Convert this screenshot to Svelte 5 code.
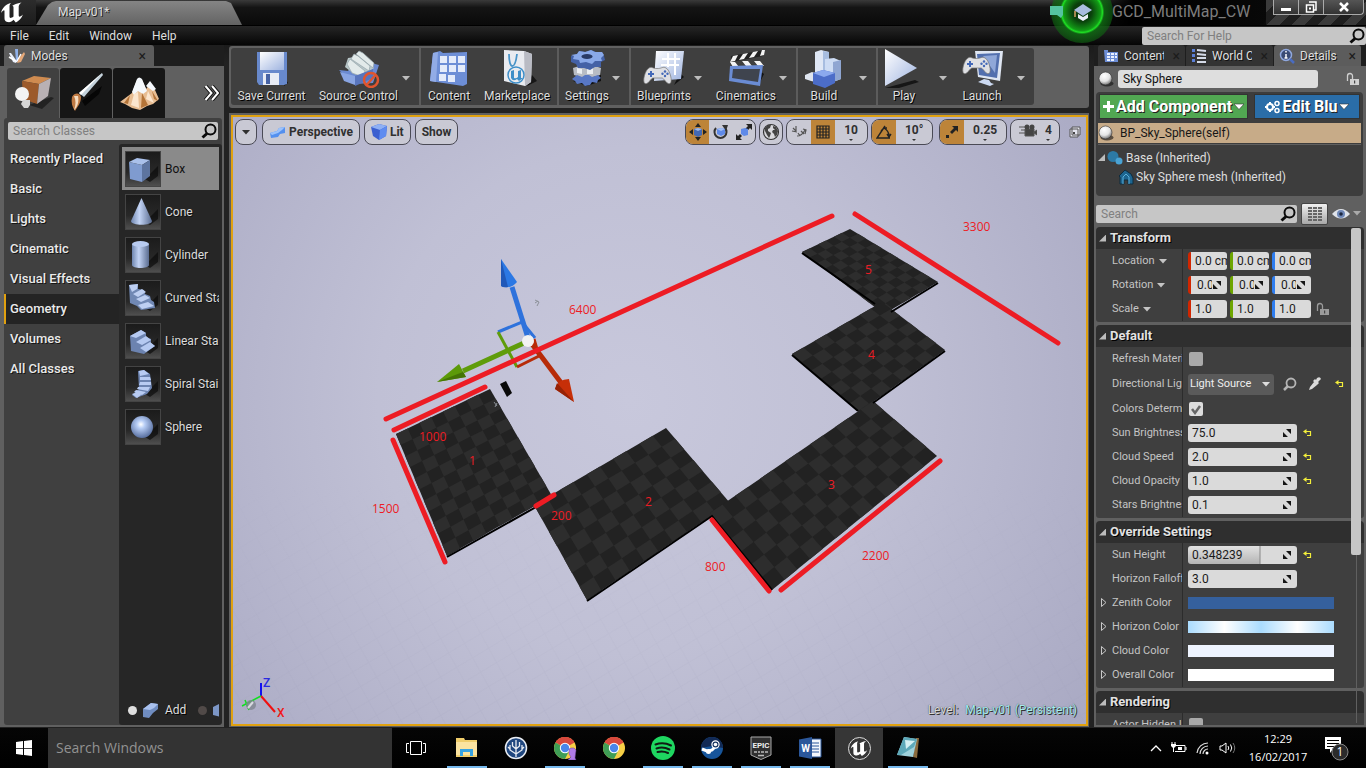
<script>
  const categories = ['Recently Placed', 'Basic', 'Lights', 'Cinematic', 'Visual Effects', 'Geometry', 'Volumes', 'All Classes'];
  const shapes = ['Box', 'Cone', 'Cylinder', 'Curved Stair', 'Linear Stair', 'Spiral Stair', 'Sphere'];

  const toolGroups = [
    { items: [{ name: 'Save Current', icon: 'save', cls: 'save' }, { name: 'Source Control', icon: 'source', arrow: true, cls: 'source' }] },
    { items: [{ name: 'Content', icon: 'content', cls: 'content' }, { name: 'Marketplace', icon: 'market', cls: 'market' }] },
    { pad: true, items: [{ name: 'Settings', icon: 'settings', arrow: true }] },
    { pad: true, items: [{ name: 'Blueprints', icon: 'blueprints', arrow: true }, { name: 'Cinematics', icon: 'cinematics', arrow: true, cls: 'cine' }] },
    { items: [{ name: 'Build', icon: 'build', arrow: true, cls: 'wide' }] },
    { items: [{ name: 'Play', icon: 'play', arrow: true, cls: 'wide' }, { name: 'Launch', icon: 'launch', arrow: true, cls: 'wide' }] }
  ];

  const sections = [
    {
      title: 'Transform',
      rows: [
        { label: 'Location', kind: 'vector', values: ['0.0 cm', '0.0 cm', '0.0 cm'] },
        { label: 'Rotation', kind: 'vector', values: ['0.0°', '0.0°', '0.0°'], spin: true },
        { label: 'Scale', kind: 'vector', values: ['1.0', '1.0', '1.0'], lock: true }
      ]
    },
    {
      title: 'Default',
      rows: [
        { label: 'Refresh Material', kind: 'check', checked: false },
        { label: 'Directional Light Actor', kind: 'select', value: 'Light Source' },
        { label: 'Colors Determined', kind: 'check', checked: true },
        { label: 'Sun Brightness', kind: 'number', value: '75.0', reset: true },
        { label: 'Cloud Speed', kind: 'number', value: '2.0', reset: true },
        { label: 'Cloud Opacity', kind: 'number', value: '1.0', reset: true },
        { label: 'Stars Brightness', kind: 'number', value: '0.1' }
      ]
    },
    {
      title: 'Override Settings',
      rows: [
        { label: 'Sun Height', kind: 'number', value: '0.348239', reset: true, slider: true },
        { label: 'Horizon Falloff', kind: 'number', value: '3.0' },
        { label: 'Zenith Color', kind: 'color', cls: 'zenith' },
        { label: 'Horizon Color', kind: 'color', cls: 'horizon' },
        { label: 'Cloud Color', kind: 'color', cls: 'cloud' },
        { label: 'Overall Color', kind: 'color', cls: 'overall' }
      ]
    },
    { title: 'Rendering', rows: [{ label: 'Actor Hidden In Game', kind: 'check', checked: false }] }
  ];

  const taskApps = [
    { name: 'File Explorer', icon: 'explorer', open: true },
    { name: 'SourceTree', icon: 'tree' },
    { name: 'Chrome profile', icon: 'chrome2', open: true },
    { name: 'Chrome', icon: 'chrome' },
    { name: 'Spotify', icon: 'spotify', open: true },
    { name: 'Steam', icon: 'steam', open: true },
    { name: 'Epic Games', icon: 'epic', open: true },
    { name: 'Word', icon: 'word', open: true },
    { name: 'Unreal Editor', icon: 'unreal', active: true },
    { name: 'Notepad', icon: 'note', open: true }
  ];

  // Floor slabs: corners run left, top, right, bottom; cols x rows of the checker.
  const slabs = [
    { q: [[396, 434], [490, 389], [552, 496], [447, 556]], cols: 8, rows: 11 },
    { q: [[802, 252], [850, 229], [938, 282], [884, 314]], cols: 6, rows: 11, clip: '802,252 850,229 938,282 891,311 875,304' },
    { q: [[792, 354], [882, 302], [945, 350], [859, 412]], cols: 8, rows: 7 },
    { q: [[534, 505], [666, 428], [730, 503], [587, 600]], cols: 10, rows: 7 },
    { q: [[710, 513], [873, 401], [937, 456], [772, 590]], cols: 13, rows: 6 }
  ];
  const at = (q, u, v) => [0, 1].map((k) =>
    ((1 - u) * (1 - v) * q[0][k] + u * (1 - v) * q[1][k] + u * v * q[2][k] + (1 - u) * v * q[3][k]).toFixed(1)
  ).join(' ');
  function checks({ q, cols, rows }) {
    let d = '';
    for (let i = 0; i < cols; i++) {
      for (let j = 0; j < rows; j++) {
        if ((i + j) % 2) continue;
        const a = i / cols, b = (i + 1) / cols, c = j / rows, e = (j + 1) / rows;
        d += `M${at(q, a, c)}L${at(q, b, c)}L${at(q, b, e)}L${at(q, a, e)}Z`;
      }
    }
    return d;
  }

  const measures = [
    [386, 419, 832, 216], [855, 214, 1058, 343], [394, 430, 485, 387], [393, 440, 445, 562],
    [536, 506, 554, 495], [712, 520, 769, 591], [781, 590, 940, 461]
  ];
  const notes = [
    ['6400', 569, 314], ['3300', 963, 231], ['1000', 419, 441], ['1500', 372, 513], ['200', 551, 520],
    ['800', 705, 571], ['2200', 862, 560], ['1', 469, 465], ['2', 645, 506], ['3', 828, 489], ['4', 868, 359], ['5', 865, 274]
  ];
</script>

{#snippet lens()}
  <svg class="lens" width="16" height="16" viewBox="0 0 16 16"><circle cx="9.5" cy="6.5" r="5" fill="none" stroke="#0a0a0a" stroke-width="2"/><path d="M6 10.5L1.5 14.5" stroke="#0a0a0a" stroke-width="3"/></svg>
{/snippet}

{#snippet caret()}
  <svg class="caret" width="8" height="5" viewBox="0 0 8 5"><path d="M0 0h8L4 4.5z" fill="currentColor"/></svg>
{/snippet}

{#snippet bigCaret()}
  <svg width="10" height="7" viewBox="0 0 10 7"><path d="M0 1h10L5 6.500z" fill="#fff" stroke="#333" stroke-width=".6"/></svg>
{/snippet}

{#snippet ueMark(size)}
  <svg width={size} height={size} viewBox="0 0 24 24"><path d="M1 13C2 8 6 4 11 3C9.500 4.500 9.500 5.500 9.500 7V16.500C9.500 18.300 11 18.500 13.500 16.500V7.500C13.500 6 12.500 6 11.800 6.200C14 4.500 17 3.300 21.500 2.500C19 4.500 18.700 5.500 18.700 7V15.500C18.700 17.300 20.500 17 23 14.500C21.500 18.500 18.500 21 15.800 22.500L13.500 19.800C12 21.500 10 22.500 7.500 22C5 21.500 4.500 20 4.500 18V11C4.500 9.500 3 10 1 13Z" fill="#fff"/></svg>
{/snippet}

{#snippet ball()}
  <svg width="16" height="16" viewBox="0 0 16 16"><defs><radialGradient id="ballg" cx=".4" cy=".3" r=".7"><stop offset="0" stop-color="#fff"/><stop offset=".6" stop-color="#e4e4e4"/><stop offset="1" stop-color="#777"/></radialGradient></defs><ellipse cx="9" cy="12.500" rx="6.500" ry="3" fill="#111" opacity=".6"/><circle cx="7.500" cy="7.500" r="6.500" fill="url(#ballg)" stroke="#333" stroke-width=".6"/></svg>
{/snippet}

{#snippet spin()}
  <svg class="spin" width="10" height="10" viewBox="0 0 10 10"><path d="M4 1h5v5zM1 4v5h5z" fill="#151515"/></svg>
{/snippet}

{#snippet lock(color)}
  <svg width="14" height="14" viewBox="0 0 14 14"><path d="M1.500 9V4a2.500 2.500 0 0 1 5 0v3" fill="none" stroke={color} stroke-width="1.300"/><path d="M4 7h9v6H4z" fill={color}/><path d="M8 8.500h1.200v3H8z" fill="#444"/></svg>
{/snippet}

{#snippet reset()}
  <button class="plain" aria-label="Reset to default"><svg width="9" height="9" viewBox="0 0 9 9"><path d="M2 2.500h5.500v4H4" fill="none" stroke="#f3ee3b" stroke-width="1.200"/><path d="M0 2.500L3.500 0v5z" fill="#f3ee3b"/></svg></button>
{/snippet}

{#snippet shapeIcon(name)}
  <svg class="thumb" width="36" height="36" viewBox="0 0 36 36">
    <defs>
      <linearGradient id="tb" x2="0" y2="1"><stop offset="0" stop-color="#1b1b1b"/><stop offset=".6" stop-color="#282828"/><stop offset="1" stop-color="#505050"/></linearGradient>
      <linearGradient id="bl" x2="1"><stop offset="0" stop-color="#6f86b0"/><stop offset=".4" stop-color="#c3d4f5"/><stop offset="1" stop-color="#5a6c90"/></linearGradient>
      <radialGradient id="sp" cx=".45" cy=".38" r=".6"><stop offset="0" stop-color="#fff"/><stop offset=".3" stop-color="#b8cef6"/><stop offset="1" stop-color="#5c73a3"/></radialGradient>
    </defs>
    <rect x=".5" y=".5" width="35" height="35" fill="url(#tb)" stroke="#444"/>
    <path d="M20 28L33 15v10l-8 6z" fill="#0c0c0c" opacity=".7"/>
    {#if name === 'Box'}
      <path d="M4 11L17 14V31L5 28z" fill="#7f9bcf"/><path d="M4 11L12 7l13 2-8 5z" fill="#a9c0ea"/><path d="M17 14l8-5v16l-8 6z" fill="#5d749f"/>
    {:else if name === 'Cone'}
      <path d="M16.500 4L27 27c0 5-21 5-21 0z" fill="url(#bl)"/>
    {:else if name === 'Cylinder'}
      <path d="M7 7v21c0 4 17 4 17 0V7z" fill="url(#bl)"/><ellipse cx="15.500" cy="7" rx="8.500" ry="3" fill="#b8cbf0"/>
    {:else if name === 'Curved Stair'}
      <path d="M4 5l9-1v5l6 1 1 4 5 2 1 4 3 2 1 6-14 2-4-4-7-3z" fill="#7088b4"/><path d="M4 5l9-1-1 5-5 3zM8 14l9-5 4 3-8 5zM11 19l9-4 5 3-9 4zM13 25l10-3 6 4-12 3z" fill="#bdcff2"/>
    {:else if name === 'Linear Stair'}
      <path d="M5 13l11-6 5 3v4l5 2v4l4 3-11 8-13-3z" fill="#6c83b0"/><path d="M5 13l11-6 5 3-10 5zM11 19l10-6 5 4-9 5zM15 25l10-6 5 4-9 6z" fill="#b5c9f1"/>
    {:else if name === 'Spiral Stair'}
      <path d="M13 5l6-1 6 4 2 14-5 6-11 4-4-3 7-6z" fill="#6c83b0"/><path d="M14 5l5-1 5 4-9 2zM15 11l10 0 1 3-11 0zM15 16h11v3l-12 0zM13 21l12 0-2 4-11-2zM11 24l10 2-4 3-8-3zM7 28l6-2 3 3-4 3z" fill="#b8cbf2"/>
    {:else}
      <circle cx="17" cy="18" r="11" fill="url(#sp)"/>
    {/if}
  </svg>
{/snippet}

{#snippet pad(x, y)}
  <g transform="translate({x} {y})"><path d="M6 1C9 -1 10 2 14 1.500C18 2 20 -1 23 1C27 3 30 15 27 16.500C24 18 21 11 19 11H10C8 11 5 18 2 16.500C-1 15 2 3 6 1Z" fill="#dfe0e4" stroke="#777" stroke-width=".7"/><path d="M5 6h2V4h2v2h2v2H9v2H7V8H5z" fill="#4469b8"/><circle cx="22" cy="4.500" r="1.200" fill="#4469b8"/><circle cx="22" cy="9" r="1.200" fill="#4469b8"/><circle cx="19.500" cy="6.700" r="1.200" fill="#4469b8"/><circle cx="24.500" cy="6.700" r="1.200" fill="#4469b8"/></g>
{/snippet}

{#snippet toolIcon(name)}
  <svg width="44" height="40" viewBox="0 0 44 40">
    <defs><linearGradient id="wb" x2="1" y2="1"><stop offset="0" stop-color="#fff"/><stop offset="1" stop-color="#9fb4e0"/></linearGradient></defs>
    {#if name === 'save'}
      <path d="M34 38l4-3-3-5z" fill="#111"/><path d="M7 4h30v32l-3 1H9l-2-3z" fill="#6889cc"/><path d="M10 4h24v18H10z" fill="url(#wb)"/><path d="M13 25h16v12H13z" fill="#e8ecf5"/><path d="M16 26h4v10h-4z" fill="#4763a5"/>
    {:else if name === 'source'}
      <path d="M30 38l10-12-8 0z" fill="#111"/><path d="M2 22l9 1 6-10 17 2 8 2-6 18-20 1z" fill="#6b8ad0"/><path d="M8 19l3-9 14-2 12 12-10 8-10-2z" fill="#b9c7c9"/><path d="M10 16l3-5 15 12-2 6-11-4zM14 11l3-5 4 2 12 10-1 5zM19 6l3-3 4 2 11 10-1 5z" fill="#e2eaea" stroke="#95a5aa" stroke-width=".7"/><path d="M3 24l15 4v9L7 33z" fill="#89a5e2"/><path d="M18 28l18-7v9l-18 8z" fill="#5875bd"/><circle cx="34" cy="32" r="7" fill="none" stroke="#e0552f" stroke-width="2.500"/><path d="M29.500 37l9-10" stroke="#e0552f" stroke-width="2.500"/>
    {:else if name === 'content'}
      <path d="M3 33L6 5l7-2 3 2 24-1v32l-4 2z" fill="#6d8ed6"/><path d="M3 33L6 5l5-1-2 30z" fill="#92ace6"/><path d="M13 8h7v7h-7zM22 8h7v7h-7zM31 8h7v7h-7zM13 17h7v7h-7zM22 17h7v7h-7zM31 17h7v7h-7zM12 26h7v7h-7zM21 27h7v7h-7z" fill="#e4ebfa"/>
    {:else if name === 'market'}
      <path d="M32 38l10-5-5-6z" fill="#161616"/><path d="M9 2l20 1 8 3-1 28-6 4-21-5z" fill="#e9ebf0"/><path d="M29 3l8 3-1 28-6 4z" fill="#b9bbc4"/><path d="M14 6c0 16 6 16 8 0" fill="none" stroke="#4a94c8" stroke-width="1.800"/><circle cx="21" cy="27" r="8" fill="none" stroke="#3d8ec8" stroke-width="1.500"/><path d="M16 23l3-1v8q2 1 4-1v-6l3-1v8l2 0-4 3-2-2q-4 3-6-1z" fill="#3d8ec8"/>
    {:else if name === 'settings'}
      <path d="M8 33l14 5 14-5v-6z" fill="#111"/><path d="M8 20q14-6 28 0l-1 7q-13 5-26 0z" fill="#b8bcc4"/><path d="M12 20l5 1v5l-5-1zM22 20h6v6h-6z" fill="#eceef2"/><path d="M12 27l5 2 3-2 4 0 3 2 6-2 3 3-3 2-1 3-5-1-2 3-5 1-3-3-5 1-2-3-3-2z" fill="#5877c4"/><path d="M6 8l6-2 3-3 6 1 5-2 5 2 6 0 2 4 1 4-4 2v5l-6 0-5 3-6-2-6 0-2-4-5-2z" fill="#4461a6"/><path d="M6 7l6-1 2-3 6 1 6-2 4 2 7 0 2 3-3 3 1 3-7 0-3 3-6-2-6 1-1-3-6-1 1-3z" fill="#89a8e8"/><ellipse cx="22" cy="8.500" rx="5.500" ry="2.500" fill="#293a66"/>
    {:else if name === 'blueprints'}
      <path d="M32 37l10-8-4-4z" fill="#111"/><path d="M14 3l28 0-3 28-27 2z" fill="url(#wb)"/><path d="M20 11h18M19 17h18M26 5v14M33 5v22" stroke="#fff" stroke-width="2"/>{@render pad(1, 19)}
    {:else if name === 'cinematics'}
      <path d="M34 38l6-12-4-3z" fill="#111"/><path d="M7 8l33-6-1 6-32 6z" fill="#222"/><path d="M9 8l5-1-3 6-5 1zM19 6l5-1-4 6-5 1zM29 4l5-1-4 6-5 1zM38 2h3l-1 5-4 1zM6 14l5 0 4 5H9zM18 13h6l4 5h-6zM30 13h6l4 5h-6z" fill="#f4f4f4"/><path d="M6 18l33-1-3 21-31-5z" fill="#6a8cd4"/><path d="M9 21l27 0-2 13-26-4z" fill="#3f444e"/>
    {:else if name === 'build'}
      <path d="M13 4l6-2 8 2v24H13z" fill="#dfe7f5"/><path d="M21 3l6 1v22h-6z" fill="#a7bde0"/><path d="M23 11l9-1 7 3v18l-8 3h-8z" fill="#cddcf4"/><path d="M31 14l8-2v19l-8 3z" fill="#8fa6d2"/><path d="M3 27l7-3 8 3v8l-9-2-6-2z" fill="#dfe5ef"/><path d="M11 25l10-3 12 3v10l-10 5-12-4z" fill="#4c6dc8"/><path d="M11 25l10-3 12 3-11 4z" fill="#8ba9ee"/>
    {:else if name === 'play'}
      <path d="M3 40l30-8 4 2-20 6z" fill="#161616"/><path d="M3 1l32 19L3 38z" fill="url(#wb)"/>
    {:else}
      <path d="M15 3l28 0-3 30-22-4z" fill="#dfe6f2"/><path d="M17 6l23-1-3 25-18-3z" fill="#526fae"/><path d="M23 8l14-1-2 18z" fill="#8fa7d8"/><path d="M24 31l5 1 2 3 3 1-4 2-12-4z" fill="#ccdaf2"/>{@render pad(2, 9)}
    {/if}
  </svg>
{/snippet}

{#snippet chromeMark()}
  <circle cx="12" cy="12" r="11" fill="#f7cf46"/><path d="M12 12L2.500 6.500A11 11 0 0 1 21.500 6.500z" fill="#d8493d"/><path d="M12 12L2.500 6.500A11 11 0 0 0 12 23l4.500-9z" fill="#3f9e56"/><path d="M2.500 6.500A11 11 0 0 1 21.500 6.500L12 7z" fill="#d8493d"/><circle cx="12" cy="12" r="5.200" fill="#fff"/><circle cx="12" cy="12" r="4.200" fill="#4a86ea"/>
{/snippet}

{#snippet appIcon(name)}
  {#if name === 'unreal'}
    <span class="ue-ring">{@render ueMark(18)}</span>
  {:else}
    <svg width="24" height="24" viewBox="0 0 24 24">
      {#if name === 'explorer'}
        <path d="M1 2h8l1 2h12v17H1z" fill="#f0cd6b"/><path d="M1 6h21v13H1z" fill="#fbe3a0"/><path d="M5 20v-7h13v7h-3v-4H8v4z" fill="#38a3e0"/>
      {:else if name === 'tree'}
        <circle cx="12" cy="12" r="10.500" fill="#20477f" stroke="#e9edf3" stroke-width="1.500"/><path d="M12 21V4M12 18L6 14V9M12 18l6-4V9M12 13L8.500 10V6M12 13l3.500-3V6M6 13l-2-2M18 13l2-2" fill="none" stroke="#e9edf3" stroke-width="1.300"/>
      {:else if name === 'chrome'}
        {@render chromeMark()}
      {:else if name === 'chrome2'}
        {@render chromeMark()}<path d="M16 13l2-1h3l2 2-1 8 1 2h-8l3-3-2-3z" fill="#b17be8" stroke="#6b3f98" stroke-width=".5"/>
      {:else if name === 'spotify'}
        <circle cx="12" cy="12" r="12" fill="#1ed760"/><path d="M4.500 8.500C10 6.500 15 7 20 9.500M5.500 12.500C10 11 14 11.300 18.500 13.500M6.500 16C10 15 13.500 15.200 17 17" fill="none" stroke="#101b14" stroke-width="2" stroke-linecap="round"/>
      {:else if name === 'steam'}
        <circle cx="12" cy="12" r="11" fill="#17559a"/><path d="M1 12A11 11 0 0 1 23 12L12 10z" fill="#122a55"/><path d="M2 13l6 2.500 4-1.500 4-4" fill="none" stroke="#fff" stroke-width="3"/><circle cx="15.500" cy="8.500" r="3.600" fill="#17345f" stroke="#fff" stroke-width="1.200"/><circle cx="15.500" cy="8.500" r="1.800" fill="#fff"/><circle cx="8.500" cy="15.500" r="2.500" fill="#fff"/>
      {:else if name === 'epic'}
        <path d="M2 1h20v18l-10 4.500L2 19z" fill="#303030" stroke="#aaa"/><text x="12" y="12" text-anchor="middle" font-size="8" font-weight="700" fill="#eee" font-family="Roboto, sans-serif">EPIC</text><path d="M5 16h3M9 16h2M12 16h3M16 16h3M9 19.500h6" stroke="#bbb" stroke-width="1.500"/>
      {:else if name === 'word'}
        <path d="M13 3h10v18H13z" fill="#f4f7fc" stroke="#2b579a"/><path d="M14 7h7M14 10h7M14 13h7M14 16h7" stroke="#2b579a"/><path d="M1 3.500L14 1v22L1 20.500z" fill="#2b579a"/><text x="7.500" y="16" text-anchor="middle" font-size="10" font-weight="700" fill="#fff" font-family="Roboto, sans-serif">W</text>
      {:else if name === 'note'}
        <path d="M20 2h3l-2 20-4-1z" fill="#8a6b3e"/><path d="M8 1l13 2-4 18L1 19z" fill="#9fd2dc"/><path d="M8 1l13 2-3 8L5 19H1z" fill="#5ea9b9"/><path d="M9 4l10 1-9 8z" fill="#d5f0f3"/>
      {/if}
    </svg>
  {/if}
{/snippet}

<div class="app">
  <header class="titlebar">
    <div class="brand">{@render ueMark(24)}</div>
    <div class="level-tab"><span>Map-v01*</span></div>
    <div class="project">
      <svg class="tutorial" width="76" height="44" viewBox="0 0 76 44">
        <defs><radialGradient id="glow"><stop offset="0" stop-color="#0b3a0d"/><stop offset=".3" stop-color="#0a3f0c"/><stop offset=".6" stop-color="#129a16"/><stop offset=".66" stop-color="#1ee024"/><stop offset=".72" stop-color="#0f6a12" stop-opacity=".85"/><stop offset="1" stop-color="#0f6a12" stop-opacity=".55"/></radialGradient></defs>
        <circle cx="38" cy="12" r="31" fill="url(#glow)"/><path d="M6 6h13v9l-2 3-4-3H6z" fill="#55c3a0"/><path d="M30 10l9-6 9 6-9 6z" fill="#a9bddf"/><path d="M34 14l5 3 5-3v4l-5 3-5-3z" fill="#e9edf6"/><path d="M31 11v6" stroke="#d6a063" stroke-width="1.500"/>
      </svg>
      <span>GCD_MultiMap_CW</span>
    </div>
    <div class="win-buttons">
      <button aria-label="Minimize"><svg width="12" height="12" viewBox="0 0 12 12"><path d="M1 7h10v3H1z" fill="#fff"/></svg></button>
      <button aria-label="Restore"><svg width="12" height="12" viewBox="0 0 12 12"><path d="M4 1h7v8h-2M1.500 4h7v7h-7z" fill="none" stroke="#fff" stroke-width="1.500"/><path d="M4 6.500h2v2H4z" fill="#fff"/></svg></button>
      <button class="close" aria-label="Close"><svg width="12" height="12" viewBox="0 0 12 12"><path d="M2 2l8 8M10 2l-8 8" stroke="#fff" stroke-width="2.500"/></svg></button>
    </div>
  </header>

  <nav class="menubar">
    {#each ['File', 'Edit', 'Window', 'Help'] as m}<button class="plain">{m}</button>{/each}
    <label class="field help"><input type="text" placeholder="Search For Help" aria-label="Search For Help" />{@render lens()}</label>
  </nav>

  <main>
    <aside class="modes">
      <div class="dock-tabs left">
        <div class="dock-tab on modes-tab">
          <svg width="18" height="16" viewBox="0 0 18 16"><path d="M1 5l2 0 5 7 0 3-3-1z" fill="#e7eefb"/><path d="M7 1h3l0 13-2-1z" fill="#8fb0e8"/><path d="M16 4l1 2-4 8-4 1 2-5z" fill="#e5a878"/><path d="M1 9l5 3 3 2M9 13l4-7" stroke="#fff" fill="none" stroke-width="1.500"/></svg>
          <span>Modes</span><button class="plain x" aria-label="Close Modes">×</button>
        </div>
      </div>
      <div class="mode-buttons">
        <button class="mode on" aria-label="Place">
          <svg width="44" height="44" viewBox="0 0 44 44"><path d="M18 34l22-8 3 1-12 11z" fill="#161616" opacity=".7"/><path d="M11 10l12-5 17 2-12 6z" fill="#cf8b50"/><path d="M11 10l17 3-2 20-14-5z" fill="#9c5a2b"/><path d="M28 13l12-6-3 18-11 8z" fill="#b9b1b4"/><circle cx="11" cy="23" r="7" fill="#f3f3f3"/><path d="M12 29h7v5l-2 3h-4l-3-4z" fill="#d6d6d6"/></svg>
        </button>
        <button class="mode" aria-label="Paint">
          <svg width="44" height="44" viewBox="0 0 44 44"><path d="M18 30L38 15l-3 8-14 12z" fill="#060606"/><path d="M38 2L39 4 20 26l-5-4z" fill="#c4d2dc"/><path d="M38 2L15 22l2 2z" fill="#fff"/><path d="M8 26c3-5 8-4 9 0 0 6-3 9-6 14-3-4-4-9-3-14z" fill="#c07a43"/><path d="M10 25c2 4 2 9 0 14 4-3 5-9 4-14z" fill="#f5dcc0"/></svg>
        </button>
        <button class="mode" aria-label="Landscape">
          <svg width="44" height="44" viewBox="0 0 44 44"><path d="M3 31l12-9 5-13q2-3 5 0l4 9 4-5 5 6 4 9-6 5-6 2-7 4-8-2-7-4z" fill="#e7bd93"/><path d="M15 21l5-13q2-3 5 0l5 12-4 3-5-3-4 4zM29 15l4-5 6 8-3 2z" fill="#f4f8fc"/><path d="M13 24l-6 8 4 1zM25 22l-1 15 7-3zM35 20l6 10-4-2z" fill="#b47438"/><path d="M17 23l-3 11 8 3-1-16zM31 20l-2 8 8 4z" fill="#fbe6cf"/></svg>
        </button>
        <button class="plain more" aria-label="More modes"><svg width="16" height="16" viewBox="0 0 16 16"><path d="M1.500 1l6 7-6 7M8 1l6 7-6 7" fill="none" stroke="#111" stroke-width="4"/><path d="M1.500 1l6 7-6 7M8 1l6 7-6 7" fill="none" stroke="#fff" stroke-width="2"/></svg></button>
      </div>
      <div class="place">
        <label class="field"><input type="text" placeholder="Search Classes" aria-label="Search Classes" />{@render lens()}</label>
        <div class="place-cols">
          <div class="cats">
            {#each categories as c}<button class:on={c === 'Geometry'}>{c}</button>{/each}
          </div>
          <div class="shapes">
            {#each shapes as s, i}<button class="shape" class:on={i === 0}>{@render shapeIcon(s)}<span>{s}</span></button>{/each}
            <div class="brush">
              <i class="dot"></i>
              <svg width="18" height="18" viewBox="0 0 18 18"><path d="M1 8l8-6 7 1v5l-5 4-4 5-6-1z" fill="#6f8cc0"/><path d="M1 8l8-6 7 1-4 4-4 2z" fill="#a9c1ee"/></svg>
              <span>Add</span><i class="dot dim"></i>
              <svg class="sub" width="18" height="18" viewBox="0 0 18 18"><path d="M1 6l8-4v14l-8-2z" fill="#7c96c6"/></svg>
            </div>
          </div>
        </div>
      </div>
    </aside>

    <section class="center">
      <div class="toolbar-frame">
        <div class="toolbar">
          {#each toolGroups as g}
            <div class="group" class:pad={g.pad}>
              {#each g.items as t}
                <button class="tool {t.cls ?? ''}">{@render toolIcon(t.icon)}<span>{t.name}</span></button>
                {#if t.arrow}<button class="plain drop {t.cls ?? ''}" aria-label="{t.name} options">{@render caret()}</button>{/if}
              {/each}
            </div>
          {/each}
        </div>
      </div>

      <div class="viewport">
        <svg class="scene" viewBox="233 117 853 607" preserveAspectRatio="xMidYMid slice" role="img" aria-label="Level viewport">
          <defs>
            <radialGradient id="sky" gradientUnits="userSpaceOnUse" cx="630" cy="400" r="560"><stop offset="0" stop-color="#c8c8dc"/><stop offset=".45" stop-color="#c0c0d5"/><stop offset="1" stop-color="#a9a9c3"/></radialGradient>
            <pattern id="grid" width="16" height="16" patternUnits="userSpaceOnUse" patternTransform="matrix(1 -.6 .5 .9 0 0)"><path d="M0 0H16M0 0V16" stroke="#9a9ab5" stroke-width=".6" fill="none"/></pattern>
            <linearGradient id="fade" x2="0" y2="1"><stop offset=".6" stop-color="#000"/><stop offset="1" stop-color="#444"/></linearGradient>
            <mask id="gm"><rect x="0" y="117" width="1400" height="607" fill="url(#fade)"/></mask>
          </defs>
          <rect x="0" y="0" width="1400" height="900" fill="url(#sky)"/>
          <rect x="0" y="117" width="1400" height="607" fill="url(#grid)" mask="url(#gm)"/>
          {#each slabs as s}
            <path d="M{s.q.map((p) => p.join(' ')).join('L')}Z" fill="#222"/>
            <path d={checks(s)} fill="#2d2d2d"/>
          {/each}
          <path d="M447 557L536 507M587 601L712 516L772 590M802 253L875 304M891 312L938 283M792 355L858 411M873 403L945 351" fill="none" stroke="#000" stroke-width="2"/>
          <g fill="none" stroke-width="3"><path d="M498 332L522 322L535 338" stroke="#2e72dc"/><path d="M498 332L517 367" stroke="#5f9c0a"/><path d="M517 367L539 356L534 339" stroke="#b72b08"/></g>
          <path d="M528 338L512 287" stroke="#2e72dc" stroke-width="5"/><path d="M501 259L517 282Q510 290 501 286Z" fill="#2b78e4"/><path d="M501 259L508 287Q503 288 501 286Z" fill="#2058b8"/>
          <path d="M524 343L463 371" stroke="#5f9c0a" stroke-width="5"/><path d="M437 382L459 364L466 377Z" fill="#5c9a08"/><path d="M437 382L463 372L466 377Z" fill="#447405"/>
          <path d="M532 344L562 384" stroke="#b72b08" stroke-width="5"/><path d="M574 402L555 389Q558 379 569 379Z" fill="#c62f08"/><path d="M574 402L555 389L557 383Z" fill="#962205"/>
          <circle cx="528" cy="341" r="6" fill="#f2f2f2"/>
          <path d="M500 384L506 381L512 393L507 397Z" fill="#0a0a0a"/>
          <path d="M494 402l3 4M495 407l2-4M535 300l4 2-2 4M535 303l3-2" stroke="#8b9097" stroke-width="1" fill="none"/>
          <g stroke="#ed1c24" stroke-width="5" stroke-linecap="round">
            {#each measures as [a, b, c, d]}<path d="M{a} {b}L{c} {d}"/>{/each}
          </g>
          <g class="notes">{#each notes as [t, x, y]}<text {x} {y}>{t}</text>{/each}</g>
          <g fill="none" stroke-width="2"><path d="M261 696V683" stroke="#1010f0"/><path d="M261 696L275 712" stroke="#f01010"/><path d="M261 696L242 706M245 700l4 10" stroke="#10e020" stroke-width="1.500"/></g>
          <circle cx="251" cy="705" r="5" fill="#7f8590" opacity=".8"/><path d="M248 708l5-6" stroke="#d8dadf" stroke-width="2"/>
          <g class="axes"><text x="263" y="687" fill="#2a2ae0">Z</text><text x="277" y="717" fill="#f01818">X</text></g>
        </svg>

        <div class="vp-bar">
          <button class="pill small" aria-label="Viewport options">{@render caret()}</button>
          <button class="pill lead"><svg width="17" height="14" viewBox="0 0 17 14"><path d="M1 8l7-2 2-3 6-1v6l-5 1-2 3-7 1z" fill="#5490ef"/><path d="M1 8l7-2 2-3 6-1-3 3-4 3-6 2z" fill="#9cc2fb"/></svg>Perspective</button>
          <button class="pill lead"><svg width="16" height="16" viewBox="0 0 16 16"><path d="M0 3l8-3 8 2-1 10-7 4-6-4z" fill="#3b5fd0"/><path d="M0 3l8-3 8 2-7 4z" fill="#8fb0f4"/><path d="M9 6l7-4-1 10-7 4z" fill="#5f8cf0"/></svg>Lit</button>
          <button class="pill lead">Show</button>
          <div class="pill multi first">
            <button class="hot" aria-label="Translate"><svg width="18" height="18" viewBox="0 0 18 18"><path d="M9 0l3 4H6zM9 18l3-4H6zM0 9l4-3v6zM18 9l-4-3v6z" fill="#222"/><path d="M5 6l4-1 4 1v6l-4 2-4-2z" fill="#4469b4"/><path d="M5 6l4-1 4 1-4 2z" fill="#9db8ea"/></svg></button>
            <button aria-label="Rotate"><svg width="18" height="18" viewBox="0 0 18 18"><path d="M4 5a6 6 0 1 0 9 0" fill="none" stroke="#333" stroke-width="2"/><path d="M10 2l6 0-2 6z" fill="#333"/><path d="M5 6l4-1 4 1v5l-4 2-4-2z" fill="#5f8ae8"/><path d="M5 6l4-1 4 1-4 2z" fill="#a3bff5"/></svg></button>
            <button aria-label="Scale"><svg width="18" height="18" viewBox="0 0 18 18"><path d="M11 1h6v6l-2-2-3 3-2-2 3-3zM1 11v6h6l-2-2 2-2-2-2-2 2z" fill="#222"/><path d="M6 6l4-1 3 1v6l-4 1-3-2z" fill="#5f8ae8"/></svg></button>
          </div>
          <button class="pill single" aria-label="World space"><svg width="18" height="18" viewBox="0 0 18 18"><circle cx="9" cy="9" r="7.500" fill="#d8d8dc" stroke="#333" stroke-width="1.200"/><path d="M3 5l3-3 3 0-1 3-2 1 0 2 3 2-1 3-1 2-2-3-2-4zM11 3l3 1 2 4-1 4-2 2-1-3-2-2 1-2 2 0-2-2z" fill="#444"/></svg></button>
          <div class="pill multi">
            <button aria-label="Surface snapping"><svg width="16" height="15" viewBox="0 0 16 15"><path d="M2 3l3 3M5 1v5M1 6l5 1M6 11q5 0 8-6M12 4l3 1-1 4M7 8l2 3M10 6l3 3" fill="none" stroke="#555" stroke-width="1.200"/></svg></button>
            <button class="hot" aria-label="Grid snap"><svg width="14" height="14" viewBox="0 0 14 14"><path d="M1 1h12v12H1zM4 1v12M7 1v12M10 1v12M1 4h12M1 7h12M1 10h12" fill="none" stroke="#222" stroke-width="1.200"/></svg></button>
            <button class="num n10">10</button>
          </div>
          <div class="pill multi ang">
            <button class="hot" aria-label="Rotation snap"><svg width="16" height="16" viewBox="0 0 16 16"><path d="M14 14H1L9 2M8 4q5 3 5 8M5 7l3-3 3 0M11 10l2 3 2-3" fill="none" stroke="#222" stroke-width="1.400"/></svg></button>
            <button class="num n10d">10°</button>
          </div>
          <div class="pill multi scl">
            <button class="hot" aria-label="Scale snap"><svg width="14" height="14" viewBox="0 0 14 14"><path d="M7 1h6v6l-2-2-4 4-2-2 4-4zM1 10h3v3H1z" fill="#222"/></svg></button>
            <button class="num n25">0.25</button>
          </div>
          <button class="pill num cam"><svg width="18" height="14" viewBox="0 0 18 14"><path d="M6 6h9v7H6zM15 9l3-2v5l-3-2zM0 4h6M2 7h4M0 10h6" fill="#444" stroke="#555"/><circle cx="8" cy="4" r="2.500" fill="#444"/><circle cx="13" cy="4" r="2.500" fill="#444"/></svg>4</button>
          <button class="plain max" aria-label="Maximize viewport"><svg width="12" height="12" viewBox="0 0 12 12"><path d="M3 1h8v8H3zM1 3h8v8H1z" fill="#e4e4ee" stroke="#555" stroke-width="1"/><path d="M4 6h2v2H4z" fill="#444"/></svg></button>
        </div>
        <div class="level">Level: <b>Map-v01 (Persistent)</b></div>
      </div>
    </section>

    <aside class="details">
      <div class="dock-tabs">
        <div class="dock-tab"><svg width="16" height="16" viewBox="0 0 16 16"><path d="M1 2h4v2h10v10H2z" fill="#6d8ed6"/><path d="M4 5h3v2H4zM8 5h3v2H8zM12 5h2v2h-2zM4 8h3v2H4zM8 8h3v2H8zM12 8h2v2h-2zM4 11h3v2H4zM8 11h3v2H8z" fill="#e9f0ff"/></svg><span>Content</span><button class="plain x" aria-label="Close Content">×</button></div>
        <div class="dock-tab"><svg width="16" height="16" viewBox="0 0 16 16"><path d="M1 1h3v3H1zM1 6h3v3H1zM1 11h3v3H1z" fill="#5b80d8"/><path d="M6 2l9 1M6 6l9 1M6 10h9M6 14h9" stroke="#d5dbe8" stroke-width="2"/></svg><span>World C</span><button class="plain x" aria-label="Close World Outliner">×</button></div>
        <div class="dock-tab on"><svg width="16" height="16" viewBox="0 0 16 16"><circle cx="7" cy="7" r="5.500" fill="#3a4b74" stroke="#90a8de" stroke-width="1.500"/><path d="M7 3v1.500M7 6v4M5.500 10h3" stroke="#fff" stroke-width="1.500"/><path d="M11 11l4 4" stroke="#4a6cc0" stroke-width="2.500"/></svg><span>Details</span><button class="plain x" aria-label="Close Details">×</button></div>
      </div>

      <div class="name-row">
        {@render ball()}
        <input type="text" value="Sky Sphere" aria-label="Actor name" />
        <button class="plain" aria-label="Lock">{@render lock('#cfcfcf')}</button>
      </div>

      <div class="components">
        <div class="comp-buttons">
          <button class="add"><svg width="11" height="11" viewBox="0 0 11 11"><path d="M4 0h3v4h4v3H7v4H4V7H0V4h4z" fill="#fff"/></svg><span>Add Component</span>{@render bigCaret()}</button>
          <button class="edit"><svg width="16" height="14" viewBox="0 0 16 14"><circle cx="5" cy="7" r="3" fill="none" stroke="#fff" stroke-width="2"/><path d="M5 2v2M5 10v2M0 7h2M8 7h2" stroke="#fff" stroke-width="2"/><circle cx="12" cy="3.500" r="2" fill="none" stroke="#fff" stroke-width="1.500"/><circle cx="12" cy="10.500" r="2" fill="none" stroke="#fff" stroke-width="1.500"/></svg><span>Edit Blu</span>{@render bigCaret()}</button>
        </div>
        <div class="self">{@render ball()}<span>BP_Sky_Sphere(self)</span></div>
        <div class="node"><i class="tri"></i><svg width="16" height="16" viewBox="0 0 16 16"><circle cx="6" cy="6.500" r="5.500" fill="#2c7aa6"/><circle cx="12" cy="11" r="3.500" fill="#4aa3d4"/></svg><span>Base (Inherited)</span></div>
        <div class="node child"><svg width="16" height="16" viewBox="0 0 16 16"><path d="M1 7l6-6 6 4 2 4v6h-5v-4H6v4H2V8z" fill="#1d6590" stroke="#0e2c3f"/><path d="M5 15V8l3-3 3 3v7" fill="none" stroke="#5aaed8"/></svg><span>Sky Sphere mesh (Inherited)</span></div>
      </div>

      <div class="filter">
        <label class="field"><input type="text" placeholder="Search" aria-label="Search details" />{@render lens()}</label>
        <button class="matrix" aria-label="Property matrix"><svg width="14" height="15" viewBox="0 0 14 15"><path d="M0 1h4v2H0zM5 1h4v2H5zM10 1h4v2h-4zM0 4h4v2H0zM5 4h4v2H5zM10 4h4v2h-4zM0 7h4v2H0zM5 7h4v2H5zM10 7h4v2h-4zM0 10h4v2H0zM5 10h4v2H5zM10 10h4v2h-4zM0 13h4v2H0zM5 13h4v2H5zM10 13h4v2h-4z" fill="#666"/></svg></button>
        <button class="plain eye" aria-label="View options"><svg width="18" height="14" viewBox="0 0 18 14"><path d="M0 7Q9 -3 18 7Q9 16 0 7z" fill="#dfe3ea"/><circle cx="9" cy="7" r="4" fill="#6f88b8"/><circle cx="9" cy="7" r="1.800" fill="#1c2740"/></svg>{@render caret()}</button>
      </div>

      <div class="props">
        {#each sections as s}
          <section>
            <h2><i class="tri"></i>{s.title}</h2>
            <div class="rows">
              {#each s.rows as r}
                <div class="row" class:tall={r.kind === 'select'}>
                  <div class="name">
                    {#if r.kind === 'color'}<svg class="expand" width="6" height="9" viewBox="0 0 6 9"><path d="M.5 .5v8L5 4.500z" fill="none" stroke="#c8c8c8"/></svg>{/if}
                    <span>{r.label}</span>{#if r.kind === 'vector'}{@render caret()}{/if}
                  </div>
                  <div class="val">
                    {#if r.kind === 'vector'}
                      {#each r.values as v, i}<label class="axis a{i}" class:spun={r.spin}><input type="text" value={v} aria-label="{r.label} {'XYZ'[i]}" />{#if r.spin}{@render spin()}{/if}</label>{/each}
                      {#if r.lock}<button class="plain lk" aria-label="Lock scale">{@render lock('#9a9a9a')}</button>{/if}
                    {:else if r.kind === 'check'}
                      <input type="checkbox" checked={r.checked} aria-label={r.label} />
                    {:else if r.kind === 'select'}
                      <label class="pick"><select aria-label={r.label}><option>{r.value}</option></select>{@render caret()}</label>
                      <button class="plain find" aria-label="Browse"><svg width="14" height="14" viewBox="0 0 14 14"><circle cx="8" cy="6" r="4.500" fill="none" stroke="#b5b5b5" stroke-width="1.800"/><path d="M5 9l-4 4" stroke="#b5b5b5" stroke-width="2.500"/></svg></button>
                      <button class="plain dropper" aria-label="Pick actor"><svg width="14" height="14" viewBox="0 0 14 14"><path d="M9 1q3-2 4 1l-3 3 1 1-2 2-4-4 2-2 1 1zM6 5l3 3-5 4-3 1 1-3z" fill="#dcdcdc"/></svg></button>
                      {@render reset()}
                    {:else if r.kind === 'number'}
                      <label class="number" class:slider={r.slider}><input type="text" value={r.value} aria-label={r.label} />{@render spin()}</label>
                      {#if r.reset}{@render reset()}{/if}
                    {:else}
                      <button class="swatch {r.cls}" aria-label={r.label}></button>
                    {/if}
                  </div>
                </div>
              {/each}
            </div>
          </section>
        {/each}
        <div class="track"><div class="bar"></div></div>
      </div>
    </aside>
  </main>

  <footer class="taskbar">
    <button class="start" aria-label="Start"><svg width="16" height="16" viewBox="0 0 16 16"><path d="M0 2l7-1v7H0zM8 1l8-1v8H8zM0 8.700h7V15l-7-1zM8 8.700h8V16l-8-1z" fill="#fff"/></svg></button>
    <input class="winsearch" type="text" placeholder="Search Windows" aria-label="Search Windows" />
    <button class="view" aria-label="Task View"><svg width="20" height="16" viewBox="0 0 20 16"><path d="M4.500 1.500h11v13h-11zM3 3.500H.5v9H3M17 3.500h2.500v9H17" fill="none" stroke="#fff"/></svg></button>
    <div class="apps">
      {#each taskApps as a}<button class:open={a.open} class:active={a.active} aria-label={a.name}>{@render appIcon(a.icon)}</button>{/each}
    </div>
    <div class="tray">
      <svg width="12" height="16" viewBox="0 0 12 16"><path d="M1 11l5-5 5 5" fill="none" stroke="#fff" stroke-width="1.300"/></svg>
      <svg width="16" height="16" viewBox="0 0 16 16"><path d="M5 5.500h9v6H4M15 7v3" fill="none" stroke="#fff"/><path d="M7 7h4v3H7zM0 4h5v2L3 8v4H2V8L0 6z" fill="#fff"/><path d="M1 2v2M4 2v2" stroke="#fff"/></svg>
      <svg width="14" height="16" viewBox="0 0 14 16"><path d="M1 13A11 11 0 0 1 12 3M4 14A8 8 0 0 1 12 6M7 14A5 5 0 0 1 12 9" fill="none" stroke="#ddd" stroke-width="1.200"/><circle cx="11" cy="13" r="1.500" fill="#fff"/></svg>
      <svg width="18" height="16" viewBox="0 0 18 16"><path d="M1 6h2l4-3v10l-4-3H1z" fill="none" stroke="#fff"/><path d="M9 6q1.500 2 0 4M11.500 4.500q2.500 3.500 0 7" fill="none" stroke="#fff"/><path d="M14 3q3.500 5 0 10" fill="none" stroke="#777"/></svg>
    </div>
    <div class="clock"><span>12:29</span><span>16/02/2017</span></div>
    <button class="notify" aria-label="Notifications"><svg width="26" height="28" viewBox="0 0 26 28"><path d="M1 3h16v12H9l-3 4v-4H1z" fill="#fff"/><path d="M3 6.500h12M3 9.500h12M3 12.500h8" stroke="#000"/><circle cx="16" cy="18" r="8" fill="#2b2b2b" stroke="#888"/></svg><b>1</b></button>
  </footer>
</div>

<style>
  :global(body) { margin: 0; background: #000; }
  .app { display: flex; flex-direction: column; height: 100vh; overflow: hidden; background: #222; color: #dedede; font-family: Roboto, "Liberation Sans", sans-serif; font-size: 12px; line-height: 16px; }
  .app *, .app *::before { box-sizing: border-box; }
  button, input, select { font: inherit; color: inherit; margin: 0; padding: 0; border: 0; background: none; }
  svg { flex: none; display: block; }
  .plain { display: flex; align-items: center; }

  .titlebar { display: flex; flex: none; height: 26px; background: linear-gradient(#3a3a3a, #141414 30%, #0a0a0a); border-bottom: 1px solid #000; }
  .brand { width: 36px; flex: none; background: linear-gradient(#2c2c2c, #1c1c1c); }
  .level-tab { width: 206px; flex: none; margin-top: 1px; padding: 3px 0 0 22px; background: linear-gradient(#858585, #636363); clip-path: polygon(12px 4px, 16px 1px, 20px 0, 190px 0, 195px 2px, 206px 24px, 0 24px); text-shadow: 1px 1px #222; }
  .project { position: relative; margin-left: auto; width: 224px; padding: 4px 0 0 70px; font-size: 16px; color: #7d7d7d; background: linear-gradient(100deg, transparent 20%, #000 40%, #080808); border-radius: 0 0 6px 6px; }
  .project > span { position: relative; }
  .tutorial { position: absolute; left: 2px; top: 0; z-index: 2; }
  .win-buttons { display: flex; flex: none; width: 100px; padding-left: 7px; background: repeating-linear-gradient(135deg, #3b3b3b 0 9px, #1e1e1e 9px 18px); }
  .win-buttons button { display: flex; align-items: center; justify-content: center; width: 25px; height: 15px; border: 1px solid #aaa; border-top: 0; border-right: 0; background: linear-gradient(#555, #333); }
  .win-buttons .close { width: 41px; border-right: 1px solid #aaa; border-radius: 0 0 4px 0; }
  .menubar { display: flex; flex: none; align-items: center; height: 19px; padding-left: 10px; gap: 20px; background: linear-gradient(#262626, #050505); }
  .field { display: flex; align-items: center; height: 18px; background: #c6c6c6; border-radius: 2px; padding: 0 1px 0 5px; color: #222; }
  .field input { flex: 1; min-width: 0; outline: none; }
  .field input::placeholder { color: #808080; opacity: 1; }
  .help { margin-left: auto; width: 224px; }

  main { display: flex; flex: 1; min-height: 0; background: linear-gradient(#1b1b1b, #222 20px); }
  .dock-tabs { display: flex; flex: none; height: 21px; gap: 1px; background: #1e1e1e; }
  .dock-tab { display: flex; flex: 1; align-items: center; min-width: 0; padding: 0 5px; background: #333; border-radius: 3px 3px 0 0; text-shadow: 1px 1px #111; }
  .dock-tab.on { background: #5c5c5c; }
  .dock-tab span { flex: none; width: 40px; margin-left: 5px; overflow: hidden; white-space: nowrap; }
  .x { margin-left: auto; color: #1c1c1c; font-size: 14px; text-shadow: none; }
  .left { padding-left: 4px; }
  .modes-tab { flex: 0 0 150px; padding: 0 8px 0 4px; }

  .modes { display: flex; flex: 0 0 224px; flex-direction: column; min-width: 0; min-height: 0; background: #606060; margin-bottom: 1px; }
  .mode-buttons { display: flex; flex: none; gap: 1px; padding: 2px 4px 0 7px; }
  .mode { display: flex; width: 52px; height: 50px; justify-content: center; align-items: center; background: #161616; border-radius: 3px 3px 0 0; }
  .mode.on { background: #404040; }
  .more { margin-left: auto; }
  .place { display: flex; flex: 1; flex-direction: column; min-height: 0; margin: 0 2px 2px 4px; padding-top: 4px; background: #404040; border-radius: 3px; overflow: hidden; }
  .place .field { margin: 0 4px; flex: none; }
  .place-cols { display: flex; flex: 1; min-height: 0; margin-top: 4px; }
  .cats { display: flex; flex: 0 0 115px; flex-direction: column; }
  .cats button { height: 30px; padding-left: 6px; text-align: left; font-size: 13px; font-weight: 500; color: #eaeaea; text-shadow: 1px 1px #151515; white-space: nowrap; }
  .cats .on { background: #242424; border-left: 2px solid #e0a010; padding-left: 4px; }
  .shapes { display: flex; flex: 1; flex-direction: column; min-width: 0; padding: 3px; background: #262626; border-radius: 3px; overflow: hidden; }
  .shape { display: flex; flex: none; align-items: center; gap: 4px; height: 43px; padding-left: 3px; overflow: hidden; white-space: nowrap; color: #dcdcdc; text-shadow: 1px 1px #111; }
  .shape.on { background: #8a8a8a; color: #101010; text-shadow: none; }
  .brush { display: flex; align-items: center; gap: 4px; margin-top: auto; padding: 0 0 3px 6px; overflow: hidden; text-shadow: 1px 1px #000; }
  .brush svg { margin: 0 1px; }
  .dot { flex: none; width: 9px; height: 9px; border-radius: 50%; background: #dedede; }
  .dim { background: #514a48; margin-left: 8px; }

  .center { display: flex; flex: 1; flex-direction: column; min-width: 0; margin-left: 5px; }
  .toolbar-frame { flex: none; height: 62px; padding: 2px; margin-top: 1px; background: #606060; border-radius: 3px; }
  .toolbar { display: flex; width: max-content; max-width: 100%; height: 57px; background: #3f3f3f; border-radius: 3px; overflow: hidden; }
  .group { display: flex; border-left: 2px solid #5c5c5c; }
  .group:first-child { border: 0; }
  .pad { padding: 0 6px; }
  .tool { display: flex; flex-direction: column; align-items: center; white-space: nowrap; text-shadow: 1px 1px #000; }
  .tool span { margin-top: 1px; line-height: 14px; }
  .tool.save { width: 81px; }
  .tool.source { width: 81px; margin-left: 6px; }
  .drop.source { margin-right: 6px; }
  .tool.content { width: 56px; }
  .tool.market { width: 80px; }
  .tool.cine { margin-left: 11px; }
  .tool.wide { width: 52px; }
  .drop { width: 14px; height: 60px; justify-content: center; color: #bdbdbd; }
  .drop.wide { width: 26px; }

  .viewport { position: relative; flex: 1; min-height: 0; margin: 5px 0 1px; background: #606060; padding: 2px 1px 1px 2px; overflow: hidden; }
  .scene { width: 100%; height: 100%; border: 2px solid #e0a110; }
  .notes { font-family: "Open Sans", sans-serif; font-size: 12px; fill: #ed1c24; }
  .axes { font-size: 12px; font-weight: 500; }
  .vp-bar { position: absolute; left: 6px; right: 6px; top: 6px; display: flex; gap: 3px; color: #303030; font-weight: 700; }
  .pill { display: flex; flex: none; align-items: center; height: 26px; padding: 0 6px; gap: 3px; border: 1px solid #4a4a55; border-radius: 8px; background: #c9c9d4; color: #303030; overflow: hidden; white-space: nowrap; }
  .small { margin-right: 2px; }
  .lead { margin-right: 1px; }
  .multi { padding: 0; gap: 0; }
  .multi button { display: flex; align-items: center; justify-content: center; width: 24px; height: 24px; }
  .multi .hot { background: #bd8439; }
  .first { margin-left: auto; }
  .first button { width: 23px; }
  .single { padding: 0 2px; }
  .scl { margin-left: 3px; }
  .num { position: relative; padding-bottom: 4px; }
  .num::before { content: ''; position: absolute; left: 50%; bottom: 3px; margin-left: -2px; border: 2px solid transparent; border-top-color: #333; border-bottom: 0; }
  .multi .n10 { width: 32px; padding-bottom: 4px; }
  .multi .n10d { width: 36px; padding-bottom: 4px; }
  .multi .n25 { width: 42px; padding-bottom: 4px; }
  .cam { padding: 0 7px 4px 8px; gap: 8px; }
  .cam::before { left: 76%; }
  .max { margin: 0 2px 0 6px; }
  .level { position: absolute; right: 12px; bottom: 9px; color: #d8d8d8; text-shadow: 1px 1px #333, 0 0 1px #333; }
  .level b { font-weight: 400; margin-left: 4px; color: #a5ecee; }

  .details { display: flex; flex: 0 0 272px; flex-direction: column; min-width: 0; min-height: 0; margin: 0 0 1px 5px; background: linear-gradient(#1e1e1e 21px, #606060 21px); }
  .details .dock-tabs { margin: 0 5px 0 4px; }
  .name-row { display: flex; flex: none; align-items: center; height: 26px; padding: 0 6px 0 4px; gap: 4px; }
  .name-row input { width: 200px; height: 18px; padding-left: 5px; background: #dedede; color: #111; border-radius: 3px; }
  .name-row button { margin-left: auto; }
  .components { flex: none; height: 104px; margin: 0 3px 0 2px; padding: 2px; background: #3d3d3d; border-radius: 4px; }
  .comp-buttons { display: flex; gap: 6px; padding: 0 1px; }
  .comp-buttons button { display: flex; align-items: center; justify-content: center; min-width: 0; height: 25px; gap: 2px; font-size: 15px; font-weight: 700; color: #fff; text-shadow: 1px 1px #222; white-space: nowrap; border: 1px solid #333; }
  .comp-buttons .add { flex: 0 0 149px; font-size: 16px; background: #51a752; }
  .comp-buttons .edit { flex: 1; background: #2a6da8; font-size: 16px; }
  .self { display: flex; align-items: center; height: 20px; margin-top: 4px; gap: 6px; color: #161616; background: #c7ab88; }
  .self + .node { margin-top: 1px; border-top: 1px solid #606060; height: 24px; padding-top: 2px; }
  .node { display: flex; align-items: center; height: 18px; gap: 3px; white-space: nowrap; }
  .node > .tri { margin-right: -1px; }
  .child { padding-left: 20px; gap: 2px; }
  .tri { flex: none; width: 7px; height: 7px; background: #bcbcbc; clip-path: polygon(100% 0, 100% 100%, 0 100%); }
  .filter { display: flex; flex: none; align-items: center; height: 31px; padding: 4px 5px 0 2px; gap: 4px; }
  .filter .field { flex: 1; min-width: 0; }
  .matrix { display: flex; flex: none; align-items: center; justify-content: center; width: 27px; height: 22px; border: 1px solid #444; border-radius: 2px; background: linear-gradient(#f0f0f0, #a8a8a8); }
  .eye { flex: none; gap: 3px; color: #aaa; }

  .props { position: relative; flex: 1; min-height: 0; margin: 0 2px 2px; overflow: hidden; }
  .props section { margin-bottom: 3px; }
  h2 { display: flex; align-items: center; height: 22px; margin: 0; padding-left: 3px; gap: 4px; font-size: 13px; font-weight: 700; color: #e2e2e2; background: #2f2f2f; border-radius: 4px 4px 0 0; text-shadow: 1px 1px #000; }
  .rows { padding-bottom: 1px; background: #3f3f3f; border-radius: 0 0 3px 3px; }
  .row { display: flex; height: 24px; font-size: 11px; }
  .tall { height: 26px; }
  .name { position: relative; display: flex; flex: 0 0 87px; align-items: center; gap: 4px; padding-left: 16px; border-right: 1px solid #2c2c2c; overflow: hidden; white-space: nowrap; color: #c4c4c4; }
  .name span { flex: none; }
  .expand { position: absolute; left: 5px; top: 7px; }
  .val { display: flex; flex: 1; min-width: 0; align-items: center; gap: 3px; padding-left: 5px; }
  .axis { position: relative; display: flex; flex: none; align-items: center; width: 39px; height: 18px; padding-left: 4px; background: #dadada; border-left: 3px solid #d12600; border-radius: 3px; color: #1a1a1a; overflow: hidden; }
  .axis input { flex: 1; width: 100%; min-width: 0; font-size: 12px; }
  .a1 { border-color: #6da500; }
  .a2 { border-color: #2e7df0; }
  .axis .spin { position: absolute; right: 5px; background: #dadada; }
  .spun { padding-left: 6px; }
  .lk { margin-left: 2px; }
  input[type='checkbox'] { appearance: none; width: 14px; height: 14px; margin-left: 1px; border-radius: 2px; background: #a9a9a9; }
  input[type='checkbox']:checked { background: #dcdcdc url("data:image/svg+xml,%3Csvg xmlns='http://www.w3.org/2000/svg' viewBox='0 0 14 14'%3E%3Cpath d='M3 7l3 4 5-7' fill='none' stroke='%23666' stroke-width='2.5'/%3E%3C/svg%3E"); }
  .pick { position: relative; display: flex; align-items: center; width: 86px; height: 21px; border-radius: 3px; background: #5a5a5a; text-shadow: 1px 1px #111; }
  .pick select { appearance: none; width: 100%; padding-left: 2px; color: #eee; }
  .pick .caret { position: absolute; right: 4px; }
  .find { margin-left: 6px; }
  .dropper { margin: 0 10px 0 8px; }
  .number { display: flex; align-items: center; width: 109px; height: 18px; margin-right: 3px; padding: 0 5px 0 4px; border-radius: 3px; background: #dadada; color: #1a1a1a; }
  .number input { flex: 1; min-width: 0; font-size: 12px; }
  .slider { background: linear-gradient(90deg, transparent 71px, #888 72px, #dadada 73px), linear-gradient(#e2e2e2, #b4b4b4); }
  .swatch { width: 146px; height: 12px; }
  .zenith { background: #35609d; }
  .horizon { background: linear-gradient(90deg, #aadcff, #fff 25%, #aadcff 50%, #fff 75%, #aadcff); }
  .cloud { background: #eef4ff; }
  .overall { background: #fff; }
  .track { position: absolute; right: 3px; top: 1px; bottom: 2px; width: 10px; background: linear-gradient(90deg, transparent 5px, #606060 5px 6px, transparent 6px); }
  .bar { height: 66%; background: #c6c6c6; border-radius: 2px; }

  .taskbar { display: flex; flex: none; height: 40px; background: linear-gradient(#050505, #000); color: #fff; font-family: "Open Sans", sans-serif; }
  .taskbar button { display: flex; flex: none; align-items: center; justify-content: center; width: 48px; height: 40px; }
  .winsearch { flex: 0 1 344px; min-width: 0; padding-left: 8px; font-size: 14px; background: #333; outline: none; }
  .winsearch::placeholder { color: #929292; opacity: 1; }
  .apps { display: flex; gap: 1px; padding-left: 3px; }
  .taskbar .open { background: linear-gradient(#76b9ed, #76b9ed) center bottom / 40px 2px no-repeat; }
  .taskbar .active { background: #363636; }
  .ue-ring { display: flex; align-items: center; justify-content: center; width: 23px; height: 23px; border: 1px solid #ddd; border-radius: 50%; }
  .tray { display: flex; align-items: center; margin-left: auto; gap: 9px; }
  .clock { display: flex; flex: none; flex-direction: column; align-items: center; justify-content: center; width: 82px; font-size: 11px; line-height: 18px; }
  .taskbar .notify { position: relative; width: 44px; margin: 0 7px 0 -4px; }
  .notify b { position: absolute; left: 21px; top: 16px; font-weight: 400; font-size: 12px; width: 8px; text-align: center; }
</style>
